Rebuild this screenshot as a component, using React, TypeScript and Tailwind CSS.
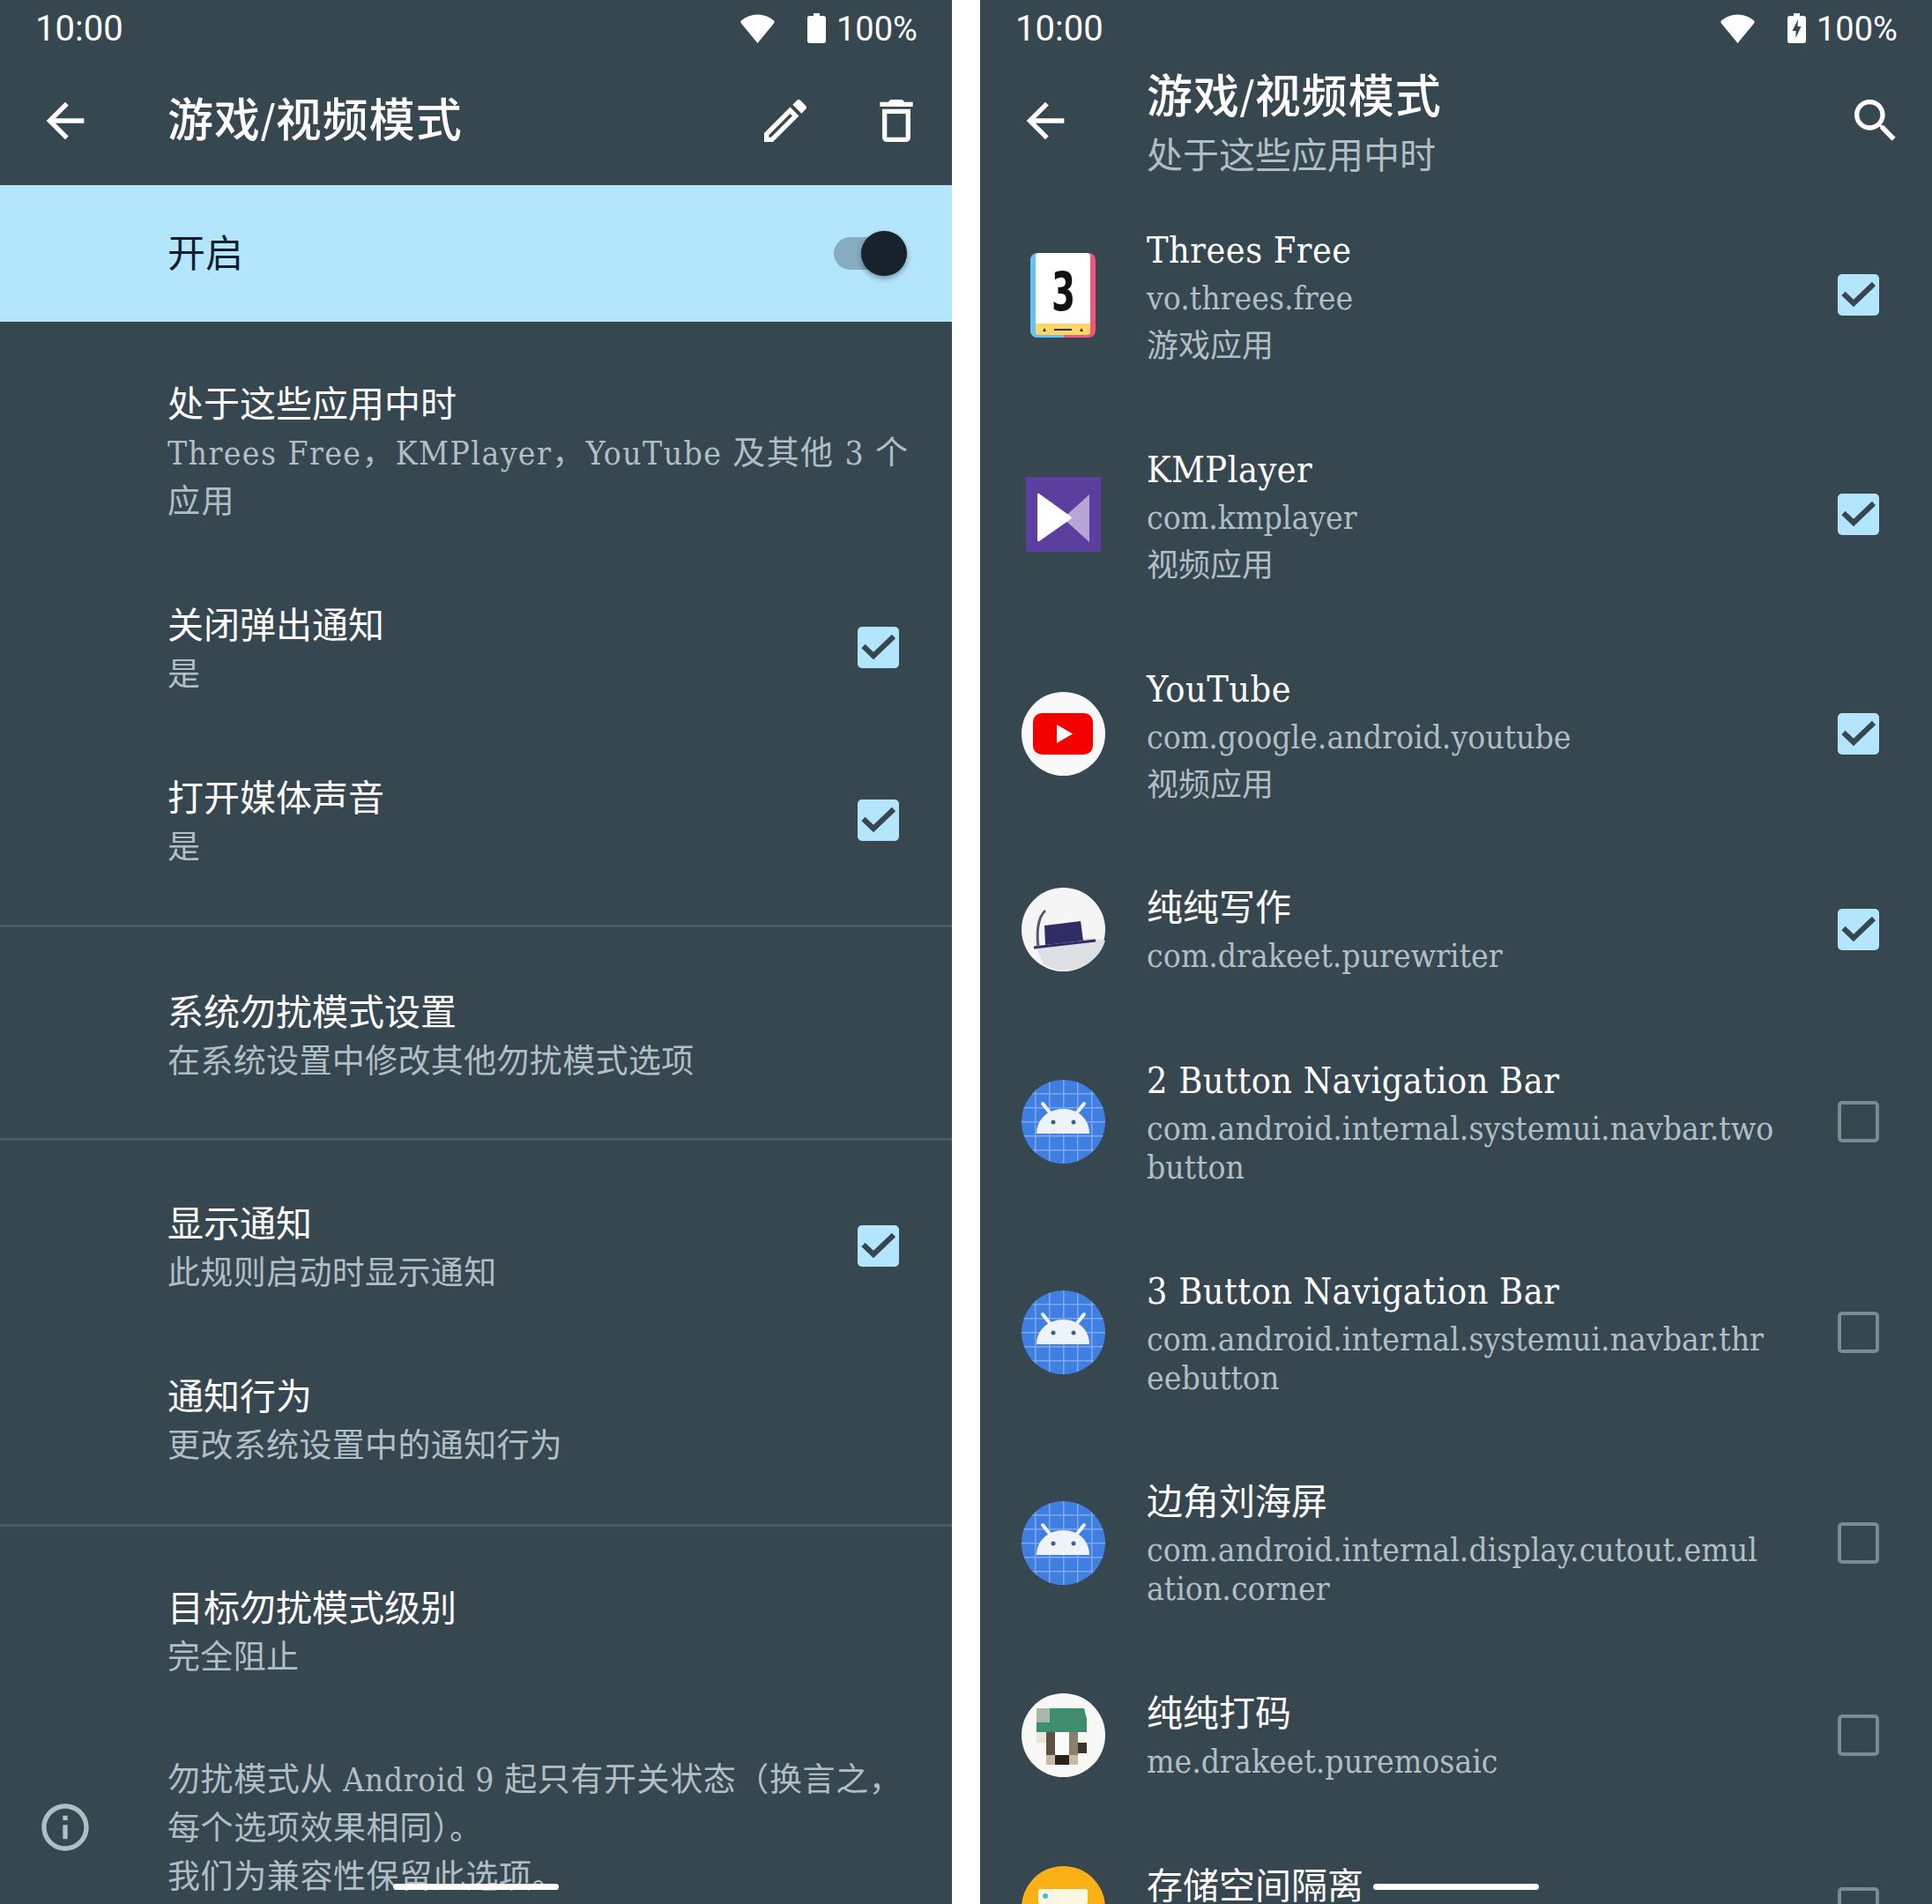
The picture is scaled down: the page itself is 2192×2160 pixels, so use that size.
import React from 'react';

const FONT = "font-['DejaVu_Serif_Condensed','Noto_Sans_CJK_SC',serif]";

const ARROW = 'M20 11H7.83l5.59-5.59L12 4l-8 8 8 8 1.41-1.41L7.83 13H20v-2z';
const PEN = 'M3 17.25V21h3.75L17.81 9.94l-3.75-3.75L3 17.25zM5.92 19H5v-.92l9.06-9.06.92.92L5.92 19zM20.71 5.63l-2.34-2.34c-.2-.2-.45-.29-.71-.29s-.51.1-.7.29l-1.83 1.83 3.75 3.75 1.83-1.83c.39-.39.39-1.02 0-1.41z';
const TRASH = 'M16 9v10H8V9h8m-1.5-6h-5l-1 1H5v2h14V4h-3.5l-1-1zM18 7H6v12c0 1.1.9 2 2 2h8c1.1 0 2-.9 2-2V7z';
const SEARCH = 'M15.5 14h-.79l-.28-.27C15.41 12.59 16 11.11 16 9.5 16 5.91 13.09 3 9.5 3S3 5.91 3 9.5 5.91 16 9.5 16c1.61 0 3.09-.59 4.23-1.57l.27.28v.79l5 4.99L20.49 19l-4.99-5zm-6 0C7.01 14 5 11.99 5 9.5S7.01 5 9.5 5 14 7.01 14 9.5 11.99 14 9.5 14z';
const INFO = 'M11 7h2v2h-2zm0 4h2v6h-2zm1-9C6.48 2 2 6.48 2 12s4.48 10 10 10 10-4.48 10-10S17.52 2 12 2zm0 18c-4.41 0-8-3.59-8-8s3.59-8 8-8 8 3.59 8 8-3.59 8-8 8z';

const Glyph = ({ d, className = 'text-white' }: { d: string; className?: string }) => (
  <svg viewBox="0 0 24 24" className={`w-16 h-16 shrink-0 ${className}`} fill="currentColor">
    <path d={d} />
  </svg>
);

const StatusBar = ({ charging }: { charging?: boolean }) => (
  <div className="h-16 flex items-center justify-between pl-10 pr-10 text-white font-['Roboto',sans-serif]">
    <span className="text-[40px] leading-none pt-[2px]">10:00</span>
    <div className="flex items-center">
      <svg viewBox="0 0 39 33" className="w-[39px] h-[33px]" fill="white">
        <path d="M19.5 33 1 10.5C0 9.300.2 8 1.500 7 6.500 2.800 12.500.500 19.500.500S32.500 2.800 37.500 7c1.300 1 1.500 2.300.5 3.500z" />
      </svg>
      <svg viewBox="0 0 21 34" className="w-[21px] h-[34px] ml-[37px]" fill="white">
        <path d="M7 0h7v3h4.500c1.400 0 2.500 1.100 2.500 2.500V31.500c0 1.400-1.100 2.500-2.500 2.500h-16C1.100 34 0 32.900 0 31.500V5.500C0 4.100 1.100 3 2.500 3H7z" />
        {charging && <path d="M12 7 5.500 20H9.500V28L15.500 15H11.500z" fill="#37474f" />}
      </svg>
      <span className="text-[38px] leading-none ml-3 w-[91px] pt-[2px]">100%</span>
    </div>
  </div>
);

const Checkbox = ({ checked }: { checked: boolean }) =>
  checked ? (
    <div className="w-[47px] h-[47px] rounded-[5px] bg-[#b3e5fc] flex items-center justify-center shrink-0">
      <svg viewBox="0 0 47 47" className="w-[47px] h-[47px]" fill="none" stroke="#37474f" strokeWidth="6">
        <path d="M6.500 22 18 33 41 11" />
      </svg>
    </div>
  ) : (
    <div className="w-[47px] h-[47px] rounded-[5px] border-[4px] border-[#7c8b92] shrink-0" />
  );

const SettingRow = ({ title, summary, checked, tall }: { title: string; summary: React.ReactNode; checked?: boolean; tall?: boolean }) => (
  <div className={`flex items-center pl-[190px] pr-[60px] ${tall ? 'h-[251px]' : 'h-[196px]'}`}>
    <div className="flex-1 min-w-0">
      <div className="text-[41px] leading-[55px] text-white">{title}</div>
      <div className="text-[37px] leading-[55px] tracking-[0.35px] text-[#b0bec5]">{summary}</div>
    </div>
    {checked !== undefined && (
      <div className="mb-2">
        <Checkbox checked={checked} />
      </div>
    )}
  </div>
);

const Divider = () => <div className="h-[3px] bg-[#4b5b63]" />;

const HomeBar = () => <div className="absolute bottom-4 left-[446px] h-[7px] w-[188px] rounded-full bg-white" />;

const LeftPanel = () => (
  <div className={`relative w-[1080px] h-[2160px] overflow-hidden bg-[#37474f] ${FONT}`}>
    <StatusBar />
    <div className="h-[146px] flex items-center pl-[42px] pr-[31px]">
      <Glyph d={ARROW} />
      <div className="ml-[84px] flex-1 text-[52px] leading-none tracking-[1px] font-medium text-white">游戏/视频模式</div>
      <Glyph d={PEN} />
      <div className="w-[62px]" />
      <Glyph d={TRASH} />
    </div>
    <div className="h-[155px] bg-[#b3e5fc] flex items-center pl-[190px] pr-[51px]">
      <div className="flex-1 text-[43px] leading-none pt-[2px] text-[#0f1e2c]">开启</div>
      <div className="relative w-[83px] h-[37px] rounded-full bg-[#86acc0]">
        <div className="absolute right-0 -top-[7px] w-[52px] h-[51px] rounded-full bg-[#18222c] shadow-[0_3px_6px_rgba(0,0,0,0.35)]" />
      </div>
    </div>
    <div className="pt-6 pb-[17px]">
      <SettingRow
        tall
        title="处于这些应用中时"
        summary={
          <span className="tracking-[1.4px] whitespace-nowrap">
            Threes Free，KMPlayer，YouTube 及其他 3 个
            <br />
            应用
          </span>
        }
      />
      <SettingRow title="关闭弹出通知" summary="是" checked />
      <SettingRow title="打开媒体声音" summary="是" checked />
    </div>
    <Divider />
    <div className="pt-[27px] pb-4">
      <SettingRow title="系统勿扰模式设置" summary="在系统设置中修改其他勿扰模式选项" />
    </div>
    <Divider />
    <div className="pt-[25px] pb-[18px]">
      <SettingRow title="显示通知" summary="此规则启动时显示通知" checked />
      <SettingRow title="通知行为" summary="更改系统设置中的通知行为" />
    </div>
    <Divider />
    <div className="pt-[23px]">
      <SettingRow title="目标勿扰模式级别" summary="完全阻止" />
    </div>
    <div className="flex items-center pl-[42px] pt-[41px] pr-[50px]">
      <div className="mb-[3px]">
        <Glyph d={INFO} className="text-[#b0bec5]" />
      </div>
      <div className="ml-[84px] text-[37px] leading-[55px] tracking-[0.6px] text-[#b0bec5]">
        勿扰模式从 Android 9 起只有开关状态（换言之，每个选项效果相同）。
        <br />
        我们为兼容性保留此选项。
      </div>
    </div>
    <HomeBar />
  </div>
);

const ThreesIcon = () => (
  <svg viewBox="0 0 74 96" className="w-[74px] h-[96px]">
    <rect width="74" height="96" rx="8" fill="#f0577b" />
    <path d="M8 0h30v96H8a8 8 0 0 1-8-8V8a8 8 0 0 1 8-8z" fill="#5fc4f4" />
    <rect x="6" y="0" width="62" height="92" rx="4" fill="#ffffff" />
    <path d="M6 80h62v10a3 3 0 0 1-3 3H9a3 3 0 0 1-3-3z" fill="#fbd66b" />
    <path d="M27 87h20" stroke="#333" strokeWidth="2" />
    <path d="M14 89l2-4 2 4zM56 89l2-4 2 4z" fill="#333" />
    <text x="24" y="65" textLength="27" lengthAdjust="spacingAndGlyphs" fontSize="60" fontWeight="700" fontFamily="DejaVu Sans, sans-serif" fill="#111">3</text>
  </svg>
);

const KmIcon = () => (
  <svg viewBox="0 0 85 85" className="w-[85px] h-[85px]">
    <rect width="85" height="85" fill="#5b3f9e" />
    <path d="M72 20v54L42 47z" fill="#b7a5d8" />
    <path d="M13 20c0-1 1-1.500 2-1l36 26c1 .8 1 2 0 2.800L15 73c-1 .5-2 0-2-1z" fill="#ffffff" />
  </svg>
);

const YoutubeIcon = () => (
  <svg viewBox="0 0 95 95" className="w-[95px] h-[95px]">
    <circle cx="47.500" cy="47.500" r="47.500" fill="#f8f8f8" />
    <rect x="13" y="24" width="68" height="47" rx="10" fill="#f40000" />
    <path d="M40 37v21l18-10.500z" fill="#ffffff" />
  </svg>
);

const WriterIcon = () => (
  <svg viewBox="0 0 95 95" className="w-[95px] h-[95px]">
    <circle cx="47.500" cy="47.500" r="47.500" fill="#f5f5f5" />
    <path d="M16 67 78 57 95 60a47.500 47.500 0 0 1-70 27z" fill="#dedfe3" />
    <path d="M26 43 67 38 70 60 27 65z" fill="#2f2c66" />
    <path d="M14 68 84 60" stroke="#2f2c66" strokeWidth="3" />
    <path d="M19 67C17 52 18 34 27 26" stroke="#55586e" strokeWidth="3" fill="none" />
  </svg>
);

const AndroidIcon = () => (
  <svg viewBox="0 0 95 95" className="w-[95px] h-[95px]">
    <defs>
      <clipPath id="android-clip">
        <circle cx="47.500" cy="47.500" r="47.500" />
      </clipPath>
    </defs>
    <g clipPath="url(#android-clip)">
      <rect width="95" height="95" fill="#3f7fe2" />
      {[15, 31, 47, 63, 79].map((p) => (
        <React.Fragment key={p}>
          <rect x={p} y="0" width="1.500" height="95" fill="#7ea9ee" />
          <rect x="0" y={p} width="95" height="1.500" fill="#7ea9ee" />
        </React.Fragment>
      ))}
    </g>
    <path d="M17 61c0-16 13-28 30.500-28S77 45 77 61z" fill="#eef3f8" />
    <path d="M24 27l8 10M71 27l-8 10" stroke="#eef3f8" strokeWidth="4" strokeLinecap="round" />
    <circle cx="36" cy="48" r="2.500" fill="#3f5f8f" />
    <circle cx="59" cy="48" r="2.500" fill="#3f5f8f" />
  </svg>
);

const MosaicIcon = () => (
  <svg viewBox="0 0 95 95" className="w-[95px] h-[95px]">
    <circle cx="47.500" cy="47.500" r="47.500" fill="#f7f7f5" />
    <path d="M17 17h54l3 12v15H17z" fill="#3f8d6f" />
    <rect x="17" y="17" width="15" height="16" fill="#a6b8a8" />
    <rect x="17" y="44" width="15" height="12" fill="#e6e4dc" />
    <rect x="28" y="44" width="10" height="36" fill="#5f5142" />
    <rect x="38" y="44" width="16" height="36" fill="#fafafa" />
    <rect x="54" y="44" width="10" height="26" fill="#8c7e6c" />
    <rect x="64" y="56" width="10" height="12" fill="#3b332a" />
    <rect x="28" y="70" width="36" height="11" fill="#c8b8a4" />
    <rect x="38" y="70" width="16" height="11" fill="#2a2119" />
  </svg>
);

const StorageIcon = () => (
  <svg viewBox="0 0 95 95" className="w-[95px] h-[95px]">
    <circle cx="47.500" cy="47.500" r="47.500" fill="#fbb116" />
    <rect x="19" y="26" width="56" height="17" rx="2" fill="#fdf6e3" />
    <circle cx="27" cy="34" r="3" fill="#4fb8d8" />
    <rect x="19" y="47" width="56" height="17" rx="2" fill="#fdf6e3" />
  </svg>
);

type AppRowData = {
  name: string;
  pkg: string;
  kind?: string;
  icon: React.ReactNode;
  checked: boolean;
  height: string;
};

const APPS: AppRowData[] = [
  { name: 'Threes Free', pkg: 'vo.threes.free', kind: '游戏应用', icon: <ThreesIcon />, checked: true, height: 'h-[249px]' },
  { name: 'KMPlayer', pkg: 'com.kmplayer', kind: '视频应用', icon: <KmIcon />, checked: true, height: 'h-[249px]' },
  { name: 'YouTube', pkg: 'com.google.android.youtube', kind: '视频应用', icon: <YoutubeIcon />, checked: true, height: 'h-[249px]' },
  { name: '纯纯写作', pkg: 'com.drakeet.purewriter', icon: <WriterIcon />, checked: true, height: 'h-[195px]' },
  { name: '2 Button Navigation Bar', pkg: 'com.android.internal.systemui.navbar.two\nbutton', icon: <AndroidIcon />, checked: false, height: 'h-[240px]' },
  { name: '3 Button Navigation Bar', pkg: 'com.android.internal.systemui.navbar.thr\neebutton', icon: <AndroidIcon />, checked: false, height: 'h-[239px]' },
  { name: '边角刘海屏', pkg: 'com.android.internal.display.cutout.emul\nation.corner', icon: <AndroidIcon />, checked: false, height: 'h-[239px]' },
  { name: '纯纯打码', pkg: 'me.drakeet.puremosaic', icon: <MosaicIcon />, checked: false, height: 'h-[196px]' },
  { name: '存储空间隔离', pkg: 'moe.shizuku.redirectstorage', icon: <StorageIcon />, checked: false, height: 'h-[196px]' },
];

const AppRow = ({ app }: { app: AppRowData }) => (
  <div className={`flex items-center ${app.height}`}>
    <div className="w-[188px] shrink-0 flex justify-center">{app.icon}</div>
    <div className="w-[724px] pl-[1px]">
      <div className={`text-[41px] leading-[56px] text-white ${/^[\x00-\x7f]+$/.test(app.name) ? 'tracking-[0.5px]' : ''}`}>{app.name}</div>
      <div className="mt-[5px] text-[37px] leading-[44px] text-[#b0bec5] whitespace-pre-line">{app.pkg}</div>
      {app.kind && <div className="mt-[10px] text-[36px] leading-[43px] text-[#b0bec5]">{app.kind}</div>}
    </div>
    <div className="flex-1 flex justify-end pr-[60px]">
      <Checkbox checked={app.checked} />
    </div>
  </div>
);

const RightPanel = () => (
  <div className={`relative w-[1080px] h-[2160px] overflow-hidden bg-[#37474f] ${FONT}`}>
    <StatusBar charging />
    <div className="h-[146px] flex items-center pl-[42px] pr-8">
      <Glyph d={ARROW} />
      <div className="ml-[83px] flex-1 pt-3">
        <div className="text-[52px] leading-[66px] tracking-[1px] font-medium text-white">游戏/视频模式</div>
        <div className="text-[41px] leading-[66px] pt-[1px] text-[#b0bec5]">处于这些应用中时</div>
      </div>
      <Glyph d={SEARCH} />
    </div>
    {APPS.map((app) => (
      <AppRow key={app.pkg} app={app} />
    ))}
    <HomeBar />
  </div>
);

export default function App() {
  return (
    <div className="w-[2192px] h-[2160px] overflow-hidden bg-white flex justify-between">
      <LeftPanel />
      <RightPanel />
    </div>
  );
}
